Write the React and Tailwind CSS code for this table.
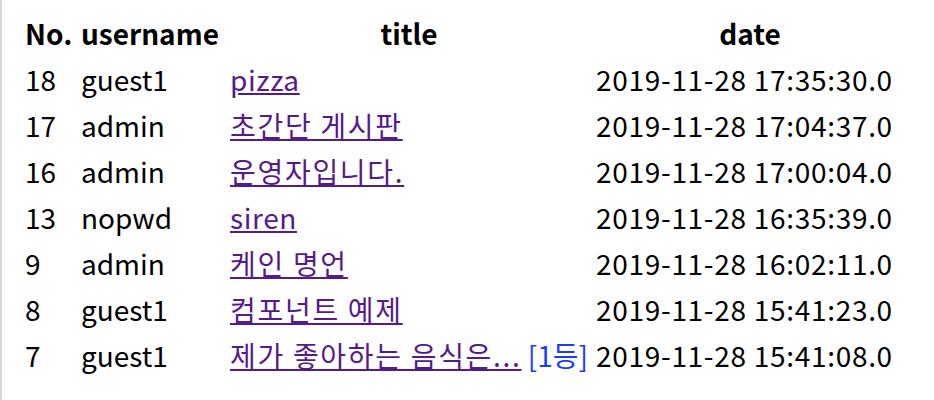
import React from "react";

const rows = [
  ["18", "guest1", "pizza", null, "2019-11-28 17:35:30.0"],
  ["17", "admin", "초간단 게시판", null, "2019-11-28 17:04:37.0"],
  ["16", "admin", "운영자입니다.", null, "2019-11-28 17:00:04.0"],
  ["13", "nopwd", "siren", null, "2019-11-28 16:35:39.0"],
  ["9", "admin", "케인 명언", null, "2019-11-28 16:02:11.0"],
  ["8", "guest1", "컴포넌트 예제", null, "2019-11-28 15:41:23.0"],
  ["7", "guest1", "제가 좋아하는 음식은...", "[1등]", "2019-11-28 15:41:08.0"],
];

const isLatin = (s) => /^[a-z]+$/.test(s);

export default function App() {
  return (
    <div
      className="h-[400px] w-[934px] bg-white border-l-2 border-[#d6d6d6] pl-[23px] pt-[10px] text-black text-[28px] leading-[46px]"
      style={{ fontFamily: '"Noto Sans CJK KR", "Noto Sans", sans-serif' }}
    >
      <div className="grid grid-cols-[56px_149px_358px_8px_308px]">
        <div className="font-bold">No.</div>
        <div className="font-bold">username</div>
        <div className="font-bold text-center">title</div>
        <div></div>
        <div className="font-bold text-center">date</div>
        {rows.map((r) => (
          <React.Fragment key={r[0]}>
            <div>{r[0]}</div>
            <div>{r[1]}</div>
            <div className="whitespace-nowrap">
              {isLatin(r[2]) ? (
                <a href="#" className="text-[#551a8b] underline tracking-[0.6px]">{r[2]}</a>
              ) : (
                <a href="#" className="text-[#551a8b] underline tracking-[1.7px]">{r[2]}</a>
              )}
              {r[3] && <span className="text-[#1a3cff]"> {r[3]}</span>}
            </div>
            <div></div>
            <div className="whitespace-nowrap tracking-[0.7px]">{r[4]}</div>
          </React.Fragment>
        ))}
      </div>
    </div>
  );
}
